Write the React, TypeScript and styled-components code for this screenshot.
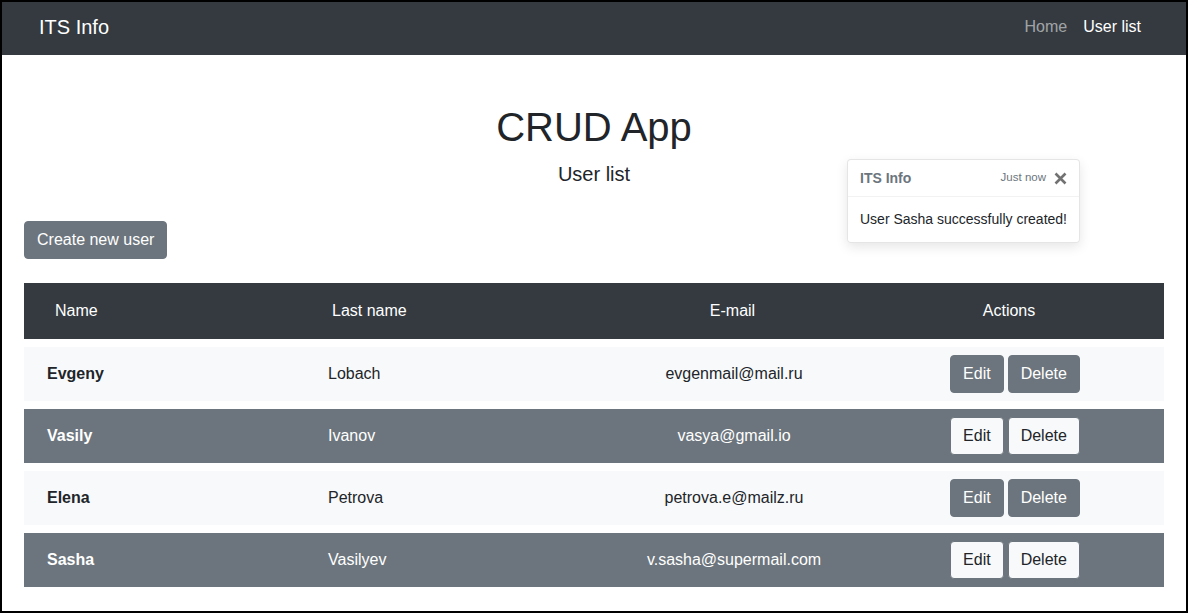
import React from "react";
import styled, { createGlobalStyle } from "styled-components";

const GlobalStyle = createGlobalStyle`
  * { box-sizing: border-box; }
  html, body { margin: 0; padding: 0; }
  body {
    font-family: "Liberation Sans", Arial, sans-serif;
    font-size: 16px;
    line-height: 1.5;
    color: #212529;
    background: #fff;
  }
`;

const Frame = styled.div`
  position: relative;
  height: 100vh;
  border: 2px solid #000;
  display: flex;
  flex-direction: column;
  overflow: hidden;
`;

const NavBar = styled.nav`
  height: 53px;
  flex: none;
  background: #343a40;
  display: flex;
  align-items: center;
  justify-content: space-between;
  padding: 0 37px 4px 37px;
`;

const Brand = styled.a`
  color: #fff;
  font-size: 20px;
  line-height: 30px;
  text-decoration: none;
`;

const NavLinks = styled.div`
  display: flex;
`;

const NavLink = styled.a<{ $active?: boolean }>`
  color: ${(p) => (p.$active ? "#fff" : "rgba(255,255,255,0.55)")};
  padding: 0 8px;
  font-size: 16px;
  line-height: 24px;
  text-decoration: none;
`;

const Main = styled.main`
  padding: 48px 22px 0;
`;

const Title = styled.h1`
  margin: 0;
  font-size: 40px;
  font-weight: 400;
  line-height: 48px;
  text-align: center;
`;

const Subtitle = styled.h5`
  margin: 11px 0 0;
  font-size: 20px;
  font-weight: 400;
  line-height: 24px;
  text-align: center;
`;

const Btn = styled.button<{ $variant: "secondary" | "light" }>`
  font-family: inherit;
  font-size: 16px;
  line-height: 24px;
  padding: 6px 12px;
  border-radius: 4px;
  border: 1px solid #6c757d;
  background: ${(p) => (p.$variant === "secondary" ? "#6c757d" : "#f8f9fa")};
  color: ${(p) => (p.$variant === "secondary" ? "#fff" : "#212529")};
  cursor: pointer;
`;

const Toolbar = styled.div`
  margin-top: 35px;
  display: flex;
`;

const Table = styled.div`
  margin-top: 24px;
  display: flex;
  flex-direction: column;
  gap: 8px;
`;

const cols = "280px 276px 308px 1fr";

const HeadRow = styled.div`
  display: grid;
  grid-template-columns: ${cols};
  height: 56px;
  align-items: center;
  background: #343a40;
  color: #fff;
`;

const HeadCell = styled.div<{ $pl?: number; $pr?: number; $center?: boolean }>`
  padding-left: ${(p) => p.$pl ?? 0}px;
  padding-right: ${(p) => p.$pr ?? 0}px;
  text-align: ${(p) => (p.$center ? "center" : "left")};
`;

const Row = styled.div<{ $dark: boolean }>`
  display: grid;
  grid-template-columns: ${cols};
  height: 54px;
  align-items: center;
  background: ${(p) => (p.$dark ? "#6c757d" : "#f8f9fa")};
  color: ${(p) => (p.$dark ? "#fff" : "#212529")};
`;

const Cell = styled.div<{ $pl?: number; $pr?: number; $center?: boolean; $bold?: boolean }>`
  padding-left: ${(p) => p.$pl ?? 0}px;
  padding-right: ${(p) => p.$pr ?? 0}px;
  text-align: ${(p) => (p.$center ? "center" : "left")};
  font-weight: ${(p) => (p.$bold ? 700 : 400)};
`;

const Actions = styled.div`
  display: flex;
  justify-content: center;
  gap: 4px;
  padding-right: 22px;
`;

const Toast = styled.div`
  position: absolute;
  top: 157px;
  left: 845px;
  width: 233px;
  background: rgba(255, 255, 255, 0.92);
  border: 1px solid rgba(0, 0, 0, 0.1);
  border-radius: 4px;
  box-shadow: 0 4px 12px rgba(0, 0, 0, 0.1);
  font-size: 14px;
`;

const ToastHeader = styled.div`
  display: flex;
  align-items: center;
  height: 37px;
  padding: 0 12px;
  color: #6c757d;
  border-bottom: 1px solid rgba(0, 0, 0, 0.05);
`;

const ToastTitle = styled.strong`
  margin-right: auto;
  font-size: 14px;
`;

const ToastTime = styled.small`
  font-size: 11.5px;
`;

const CloseBtn = styled.button`
  background: none;
  border: 0;
  padding: 0;
  margin-left: 8px;
  display: flex;
  align-items: center;
  cursor: pointer;
  opacity: 0.55;
`;

const ToastBody = styled.div`
  padding: 12px 12px 13px;
  line-height: 20px;
  color: #212529;
`;

const users = [
  { name: "Evgeny", last: "Lobach", email: "evgenmail@mail.ru" },
  { name: "Vasily", last: "Ivanov", email: "vasya@gmail.io" },
  { name: "Elena", last: "Petrova", email: "petrova.e@mailz.ru" },
  { name: "Sasha", last: "Vasilyev", email: "v.sasha@supermail.com" },
];

export default function App() {
  return (
    <>
      <GlobalStyle />
      <Frame>
        <NavBar>
          <Brand href="#">ITS Info</Brand>
          <NavLinks>
            <NavLink href="#">Home</NavLink>
            <NavLink href="#" $active>
              User list
            </NavLink>
          </NavLinks>
        </NavBar>
        <Main>
          <Title>CRUD App</Title>
          <Subtitle>User list</Subtitle>
          <Toolbar>
            <Btn $variant="secondary">Create new user</Btn>
          </Toolbar>
          <Table>
            <HeadRow>
              <HeadCell $pl={31}>Name</HeadCell>
              <HeadCell $pl={28}>Last name</HeadCell>
              <HeadCell $center $pr={3}>
                E-mail
              </HeadCell>
              <HeadCell $center $pr={34}>
                Actions
              </HeadCell>
            </HeadRow>
            {users.map((u, i) => {
              const dark = i % 2 === 1;
              return (
                <Row key={u.email} $dark={dark}>
                  <Cell $pl={23} $bold>
                    {u.name}
                  </Cell>
                  <Cell $pl={24}>{u.last}</Cell>
                  <Cell $center>{u.email}</Cell>
                  <Actions>
                    <Btn $variant={dark ? "light" : "secondary"}>Edit</Btn>
                    <Btn $variant={dark ? "light" : "secondary"}>Delete</Btn>
                  </Actions>
                </Row>
              );
            })}
          </Table>
        </Main>
        <Toast>
          <ToastHeader>
            <ToastTitle>ITS Info</ToastTitle>
            <ToastTime>Just now</ToastTime>
            <CloseBtn aria-label="Close">
              <svg width="13" height="13" viewBox="0 0 13 13">
                <path d="M1.5 1.5 L11.5 11.5 M11.5 1.5 L1.5 11.5" stroke="#000" strokeWidth="2.6" strokeLinecap="butt" />
              </svg>
            </CloseBtn>
          </ToastHeader>
          <ToastBody>User Sasha successfully created!</ToastBody>
        </Toast>
      </Frame>
    </>
  );
}
